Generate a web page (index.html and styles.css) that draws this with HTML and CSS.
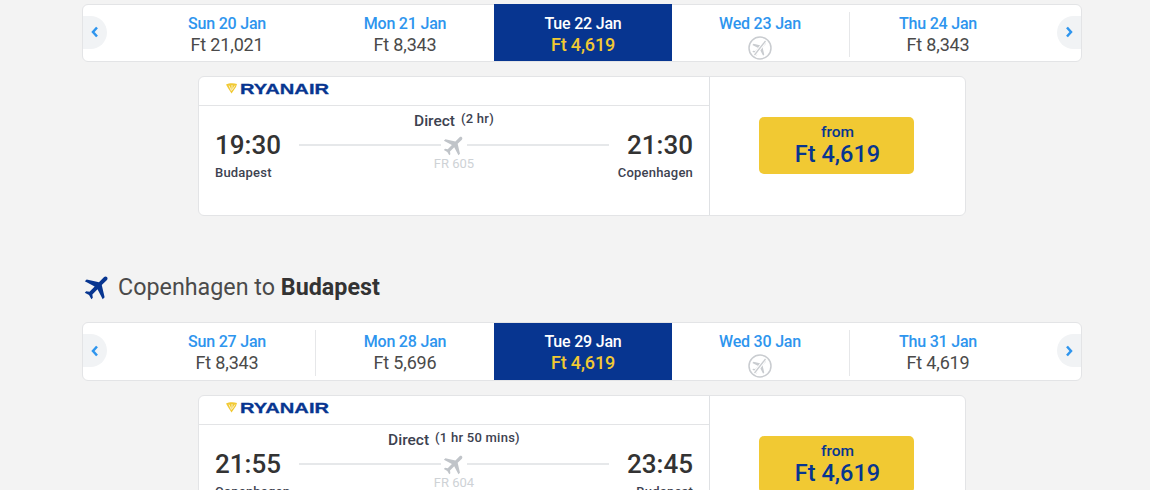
FILE: index.html
```html
<!DOCTYPE html>
<html lang="en">
<head>
<meta charset="utf-8">
<title>Flights</title>
<link rel="stylesheet" href="styles.css">
</head>
<body>
<svg class="defs" width="0" height="0" aria-hidden="true">
  <defs>
    <path id="plane" d="M21 16v-2l-8-5V3.5c0-.83-.67-1.5-1.5-1.5S10 2.67 10 3.5V9l-8 5v2l8-2.5V19l-2 1.5V22l3.5-1 3.5 1v-1.5L13 19v-5.5l8 2.5z"/>
    <g id="logo">
      <path d="M0 1.5 C3 0 8 0 11 1 L10 4 L5.5 10.5 L2 5 Z" fill="#f1c933"/>
      <path d="M3 2.5 L5.5 8 M6 2 L6 7 M9 2.5 L6.5 6.5" stroke="#fff" stroke-width=".7" fill="none"/>
      <text x="14" y="10.8" textLength="89" lengthAdjust="spacingAndGlyphs" class="logo-text">RYANAIR</text>
    </g>
    <g id="noflight">
      <circle cx="12" cy="12" r="11" fill="#fff" stroke="#c9ccd0" stroke-width="1.5"/>
      <g transform="translate(12 12) rotate(45) scale(.8) translate(-11.5 -12)"><use href="#plane" fill="#c9ccd0"/></g>
      <path d="M17.5 5 L6.5 19" stroke="#fff" stroke-width="3.4"/>
      <path d="M17.5 5 L6.5 19" stroke="#c9ccd0" stroke-width="1.3"/>
    </g>
  </defs>
</svg>

<main class="page">
  <section class="date-bar">
    <button class="nav nav-prev" aria-label="Previous"><svg width="8" height="12" viewBox="0 0 8 12"><path d="M6 1.5 L2 6 L6 10.5" class="chev"/></svg></button>
    <div class="day"><span class="day-name">Sun 20 Jan</span><span class="day-price">Ft 21,021</span></div>
    <div class="day"><span class="day-name">Mon 21 Jan</span><span class="day-price">Ft 8,343</span></div>
    <div class="day day-active"><span class="day-name">Tue 22 Jan</span><span class="day-price">Ft 4,619</span></div>
    <div class="day sep-right"><span class="day-name">Wed 23 Jan</span><svg class="no-flight" width="24" height="24" viewBox="0 0 24 24"><use href="#noflight"/></svg></div>
    <div class="day"><span class="day-name">Thu 24 Jan</span><span class="day-price">Ft 8,343</span></div>
    <button class="nav nav-next" aria-label="Next"><svg width="8" height="12" viewBox="0 0 8 12"><path d="M2 1.5 L6 6 L2 10.5" class="chev"/></svg></button>
  </section>

  <article class="card">
    <div class="card-main">
      <div class="card-head"><svg class="logo" width="104" height="13" viewBox="0 0 104 13"><use href="#logo"/></svg></div>
      <div class="route">
        <div class="end"><span class="time">19:30</span><span class="city">Budapest</span></div>
        <div class="middle">
          <div class="stops"><span class="direct">Direct</span><span class="duration">(2 hr)</span></div>
          <div class="line"><svg class="plane-icon" width="26" height="26" viewBox="0 0 24 24"><use href="#plane" transform="translate(.7 0) rotate(45 11.5 12)"/></svg></div>
          <span class="flight-no">FR 605</span>
        </div>
        <div class="end end-right"><span class="time">21:30</span><span class="city">Copenhagen</span></div>
      </div>
    </div>
    <div class="card-price">
      <button class="price-btn"><span class="from">from</span><span class="amount">Ft 4,619</span></button>
    </div>
  </article>

  <h2 class="heading">
    <svg class="heading-icon" width="32" height="32" viewBox="0 0 24 24"><use href="#plane" transform="rotate(45 12 12)"/></svg>
    <span>Copenhagen to <strong>Budapest</strong></span>
  </h2>

  <section class="date-bar">
    <button class="nav nav-prev" aria-label="Previous"><svg width="8" height="12" viewBox="0 0 8 12"><path d="M6 1.5 L2 6 L6 10.5" class="chev"/></svg></button>
    <div class="day sep-right"><span class="day-name">Sun 27 Jan</span><span class="day-price">Ft 8,343</span></div>
    <div class="day"><span class="day-name">Mon 28 Jan</span><span class="day-price">Ft 5,696</span></div>
    <div class="day day-active"><span class="day-name">Tue 29 Jan</span><span class="day-price">Ft 4,619</span></div>
    <div class="day sep-right"><span class="day-name">Wed 30 Jan</span><svg class="no-flight" width="24" height="24" viewBox="0 0 24 24"><use href="#noflight"/></svg></div>
    <div class="day"><span class="day-name">Thu 31 Jan</span><span class="day-price">Ft 4,619</span></div>
    <button class="nav nav-next" aria-label="Next"><svg width="8" height="12" viewBox="0 0 8 12"><path d="M2 1.5 L6 6 L2 10.5" class="chev"/></svg></button>
  </section>

  <article class="card">
    <div class="card-main">
      <div class="card-head"><svg class="logo" width="104" height="13" viewBox="0 0 104 13"><use href="#logo"/></svg></div>
      <div class="route">
        <div class="end"><span class="time">21:55</span><span class="city">Copenhagen</span></div>
        <div class="middle">
          <div class="stops"><span class="direct">Direct</span><span class="duration">(1 hr 50 mins)</span></div>
          <div class="line"><svg class="plane-icon" width="26" height="26" viewBox="0 0 24 24"><use href="#plane" transform="translate(.7 0) rotate(45 11.5 12)"/></svg></div>
          <span class="flight-no">FR 604</span>
        </div>
        <div class="end end-right"><span class="time">23:45</span><span class="city">Budapest</span></div>
      </div>
    </div>
    <div class="card-price">
      <button class="price-btn"><span class="from">from</span><span class="amount">Ft 4,619</span></button>
    </div>
  </article>
</main>
</body>
</html>
```

FILE: styles.css
```css
* { box-sizing: border-box; }

html, body {
  margin: 0;
  height: 490px;
  overflow: hidden;
}

body {
  background: #f3f3f3;
  font-family: Roboto, "Liberation Sans", sans-serif;
  color: #333;
}

.defs { position: absolute; }

.page {
  width: 1000px;
  margin-left: 82px;
  padding-top: 3.5px;
}

/* Date strip */
.date-bar {
  display: flex;
  height: 58.5px;
  background: #fff;
  border: 1px solid #e3e4e6;
  border-radius: 6px;
  align-items: stretch;
  justify-content: space-between;
}

.nav {
  flex: none;
  width: 24px;
  height: 33px;
  margin: 11.3px 0 0;
  padding: 0;
  border: 0;
  background: #f1f3f5;
  display: flex;
  align-items: center;
  justify-content: center;
}

.nav-prev { border-radius: 0 17px 17px 0; margin-right: 31px; }
.nav-next { border-radius: 17px 0 0 17px; margin-left: 29px; }

.chev {
  fill: none;
  stroke: #2e95ee;
  stroke-width: 2.5;
}

.day {
  flex: 1 1 178px;
  width: 178px;
  display: flex;
  flex-direction: column;
  align-items: center;
  padding-top: 9px;
  position: relative;
}

.day-active ~ .day { padding-right: 2px; }

.sep-right::after {
  content: "";
  position: absolute;
  right: 0;
  top: 7px;
  bottom: 4px;
  border-right: 1px solid #e6e7e9;
}

.day-name {
  font-size: 16px;
  line-height: 19.4px;
  font-weight: 500;
  letter-spacing: -.2px;
  color: #2e95ee;
}

.day-price {
  font-size: 18px;
  line-height: 24px;
  letter-spacing: -.15px;
  color: #4a4a4a;
}

.day-active {
  background: #073590;
  margin-top: -.5px;
  padding-top: 9.5px;
}

.day-active .day-name { color: #fff; }
.day-active .day-price { color: #f1c933; font-weight: 500; }

.no-flight { margin-top: 3px; }

/* Flight card */
.card {
  display: flex;
  width: 768px;
  height: 140px;
  margin: 14px 0 0 116px;
  background: #fff;
  border: 1px solid #e3e4e6;
  border-radius: 6px;
}

.date-bar + .card:last-child { margin-top: 14.5px; }

.card-main {
  flex: none;
  width: 511px;
  border-right: 1px solid #dfe1e4;
}

.card-head {
  height: 29px;
  padding: 6px 0 0 27px;
  border-bottom: 1px solid #e3e4e6;
}

.logo { display: block; }

.logo-text {
  font-family: "Liberation Sans", sans-serif;
  font-weight: 700;
  font-size: 15px;
  fill: #073590;
  stroke: #073590;
  stroke-width: .3;
}

.route {
  display: flex;
  padding: 0 16px 0 16px;
}

.end {
  flex: none;
  width: 84px;
  padding-top: 23px;
  display: flex;
  flex-direction: column;
}

.end-right { align-items: flex-end; }

.time {
  font-size: 26px;
  line-height: 32px;
  font-weight: 500;
  color: #333;
}

.city {
  font-size: 13px;
  line-height: 18px;
  margin-top: 3px;
  font-weight: 500;
  letter-spacing: .2px;
  color: #3d4250;
  white-space: nowrap;
}

.middle {
  flex: 1;
  display: flex;
  flex-direction: column;
  align-items: center;
  padding-top: 4px;
}

.stops {
  display: flex;
  align-items: flex-start;
  gap: 6px;
  height: 20px;
}

.direct {
  font-size: 15.5px;
  line-height: 22px;
  font-weight: 500;
  color: #3d4250;
}

.duration {
  font-size: 13px;
  line-height: 18px;
  font-weight: 500;
  letter-spacing: .25px;
  color: #3d4250;
}

.line {
  align-self: stretch;
  height: 24px;
  margin-top: 3px;
  display: flex;
  align-items: center;
  justify-content: center;
  background: linear-gradient(#e6e8ea, #e6e8ea) center / 100% 2px no-repeat;
}

.plane-icon {
  fill: #c0c4c9;
  background: #fff;
}

.flight-no {
  font-size: 13px;
  line-height: 16px;
  color: #ced2d6;
  margin-top: -1.5px;
}

.card-price {
  flex: 1;
  display: flex;
  justify-content: center;
  padding: 40px 2px 0 0;
}

.price-btn {
  width: 155px;
  height: 57px;
  padding: 6px 0 0 2px;
  border: 0;
  border-radius: 5px;
  background: #f1c933;
  display: flex;
  flex-direction: column;
  align-items: center;
  font-family: inherit;
  color: #073590;
  font-weight: 500;
}

.from {
  font-size: 15.5px;
  line-height: 18px;
}

.amount {
  font-size: 23.5px;
  line-height: 26px;
}

/* Section heading */
.heading {
  display: flex;
  align-items: center;
  gap: 4px;
  height: 30px;
  margin: 56px 0 20px;
  font-size: 23.3px;
  font-weight: 400;
  color: #4a4a4a;
}

.heading strong {
  font-weight: 700;
  color: #333;
}

.heading-icon {
  flex: none;
  fill: #073590;
}
```
